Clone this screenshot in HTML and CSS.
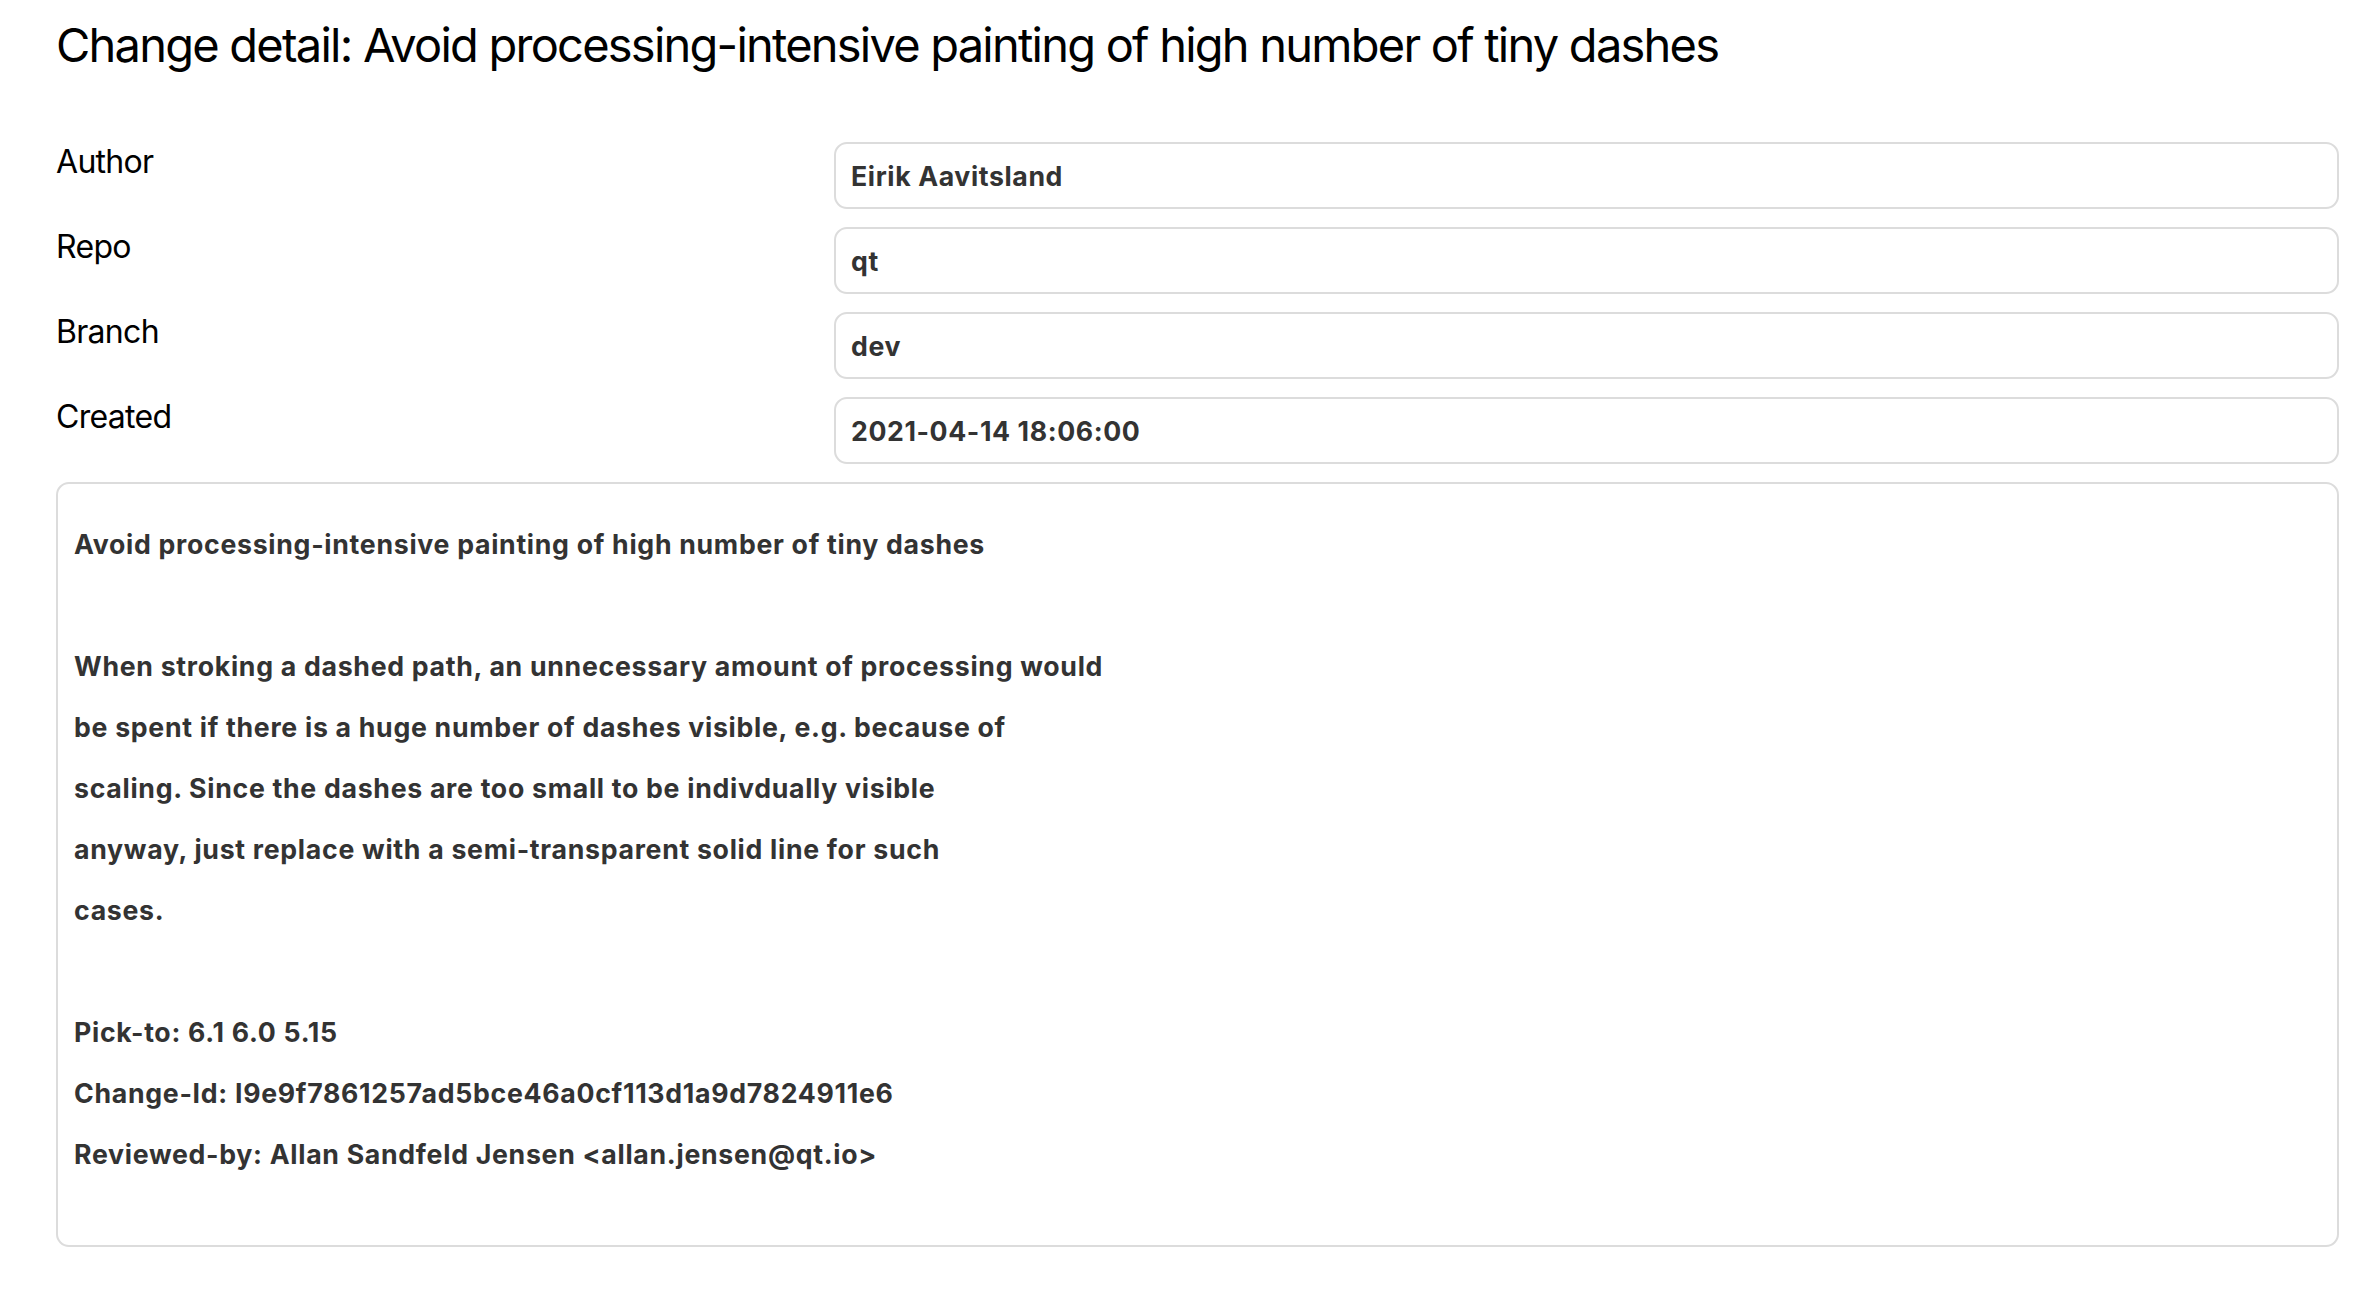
FILE: index.html
```html
<!DOCTYPE html>
<html lang="en">
<head>
<meta charset="utf-8">
<title>Change detail</title>
<link rel="stylesheet" href="styles.css">
</head>
<body>
<main class="page">
  <h1 class="title">Change detail: Avoid processing-intensive painting of high number of tiny dashes</h1>
  <div class="fields">
    <div class="label">Author</div>
    <div class="field">Eirik Aavitsland</div>
    <div class="label">Repo</div>
    <div class="field">qt</div>
    <div class="label">Branch</div>
    <div class="field">dev</div>
    <div class="label">Created</div>
    <div class="field">2021-04-14 18:06:00</div>
  </div>
  <div class="message">Avoid processing-intensive painting of high number of tiny dashes

When stroking a dashed path, an unnecessary amount of processing would
be spent if there is a huge number of dashes visible, e.g. because of
scaling. Since the dashes are too small to be indivdually visible
anyway, just replace with a semi-transparent solid line for such
cases.

Pick-to: 6.1 6.0 5.15
Change-Id: I9e9f7861257ad5bce46a0cf113d1a9d7824911e6
Reviewed-by: Allan Sandfeld Jensen &lt;allan.jensen@qt.io&gt;</div>
</main>
</body>
</html>
```

FILE: styles.css
```css
html, body {
  margin: 0;
  padding: 0;
  background: #ffffff;
}

body {
  font-family: Inter, "Liberation Sans", sans-serif;
  color: #000000;
}

.page {
  padding: 0 41px 0 56px;
}

.title {
  margin: 16px 0 0 0;
  font-size: 47px;
  line-height: 58px;
  font-weight: 400;
  letter-spacing: -1.77px;
}

.fields {
  margin-top: 68px;
  display: grid;
  grid-template-columns: 778px 1fr;
  row-gap: 18px;
}

.label {
  font-size: 32px;
  line-height: normal;
  font-weight: 400;
  letter-spacing: -0.7px;
}

.field {
  height: 63px;
  box-sizing: content-box;
  border: 2px solid #dcdcdc;
  border-radius: 13px;
  padding: 0 15px;
  display: flex;
  align-items: center;
  font-size: 26.7px;
  font-weight: 700;
  letter-spacing: 0.6px;
  color: #333333;
}

.message {
  margin-top: 18px;
  border: 2px solid #dcdcdc;
  border-radius: 13px;
  padding: 30px 16px 60px;
  white-space: pre-wrap;
  font-size: 26.7px;
  line-height: 61px;
  font-weight: 700;
  letter-spacing: 0.7px;
  color: #333333;
}
```
